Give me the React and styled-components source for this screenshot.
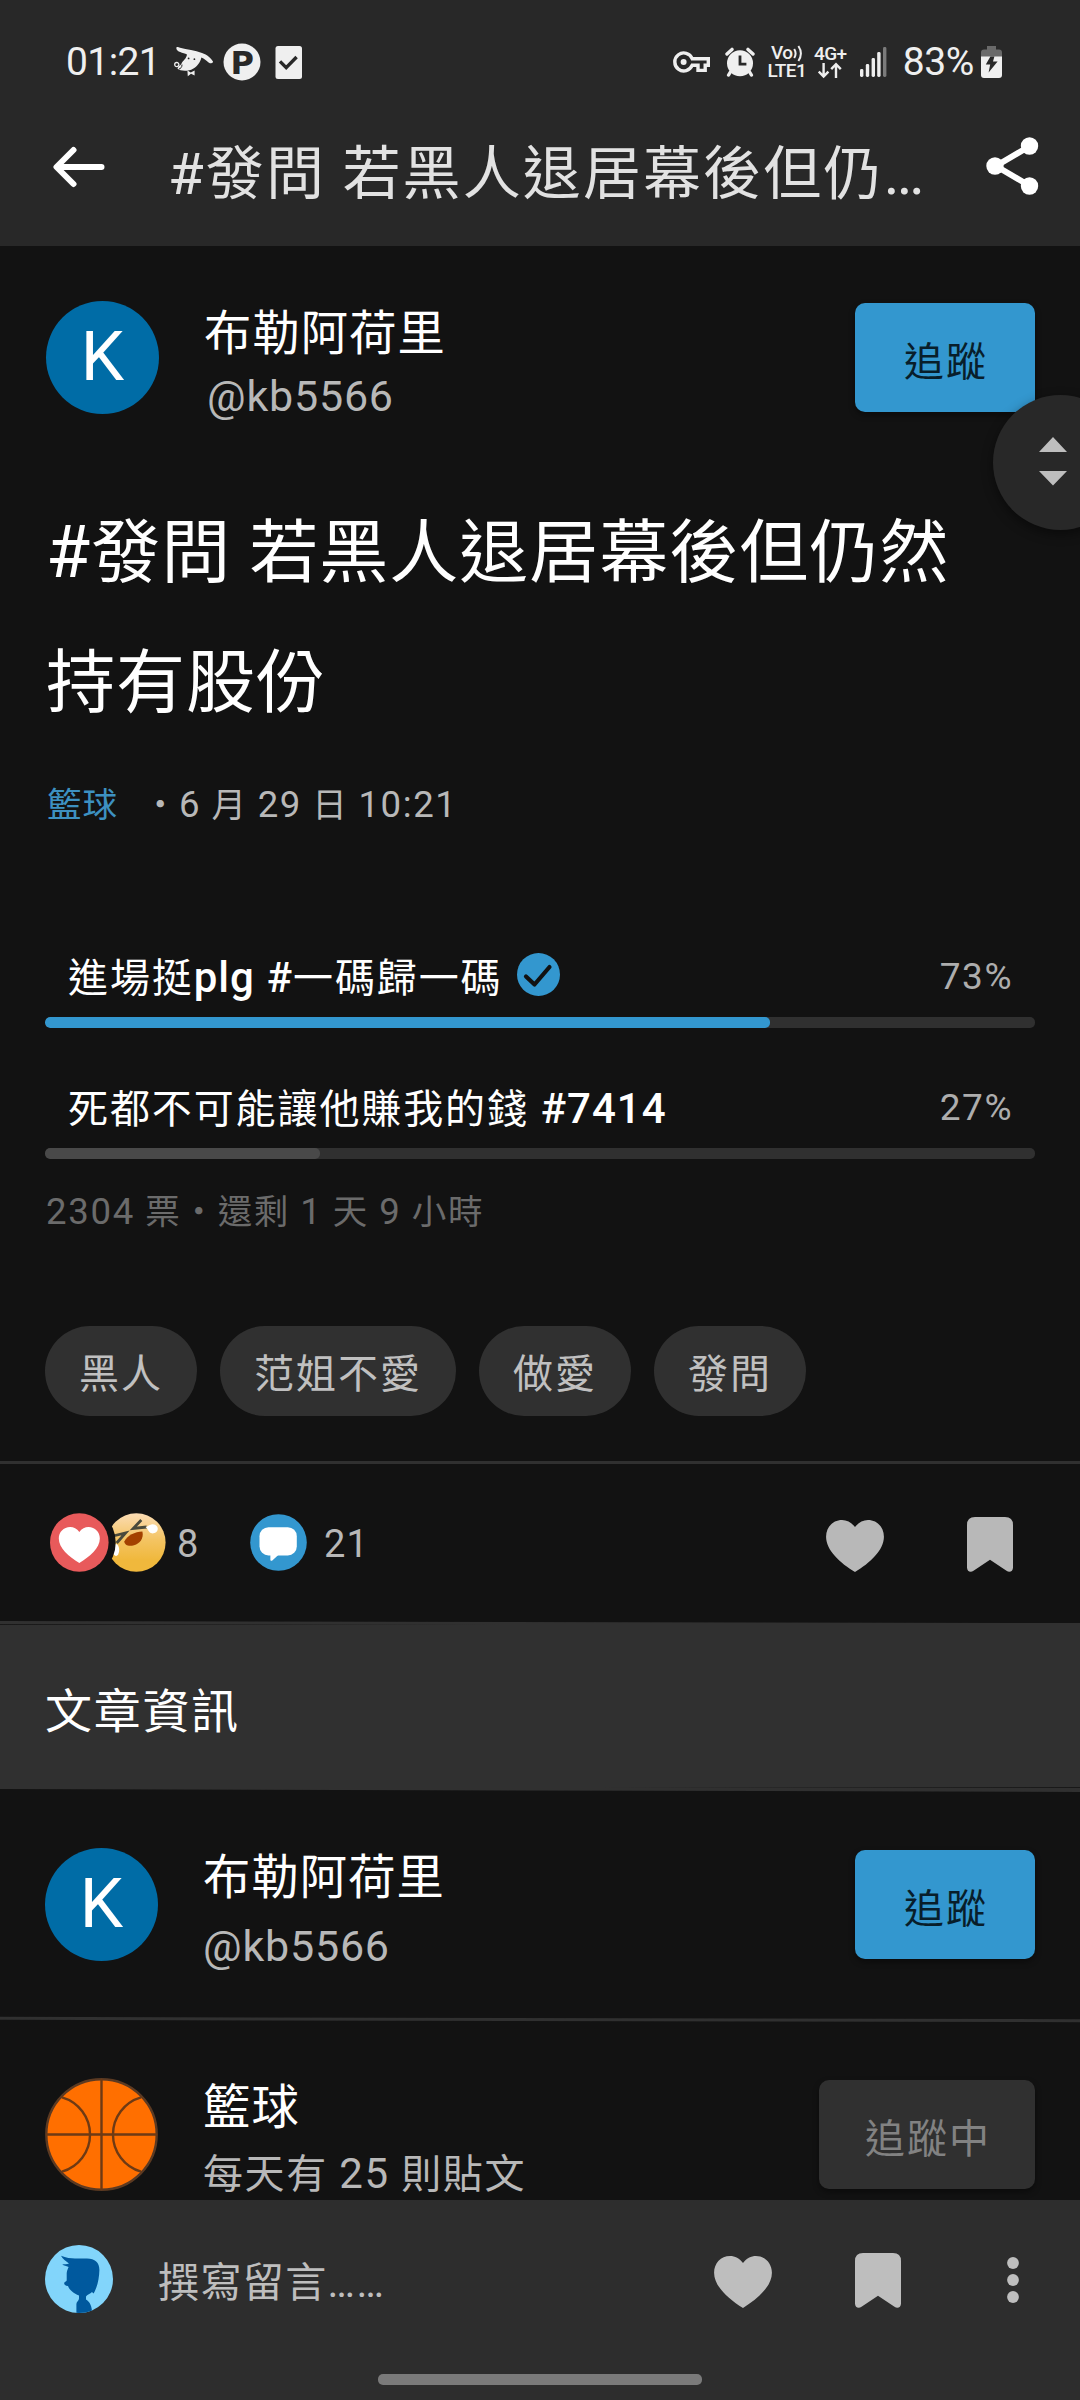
import styled, { createGlobalStyle } from 'styled-components';

const GlobalStyle = createGlobalStyle`
  * {
    box-sizing: border-box;
  }
  body {
    margin: 0;
    background-color: #121212;
    font-family: Roboto, 'Noto Sans CJK TC', sans-serif;
    color: #ffffff;
  }
  h1, h2, p {
    margin: 0;
    font-weight: 400;
  }
  button {
    border: none;
    padding: 0;
    background: none;
    font-family: inherit;
    color: inherit;
  }
  svg {
    display: block;
    flex: none;
  }
`;

const Screen = styled.div`
  position: relative;
  width: 1080px;
  height: 2400px;
  display: flex;
  flex-direction: column;
  overflow: hidden;
  background-color: #121212;
`;

const Header = styled.header`
  flex: none;
  height: 246px;
  background-color: #282828;
`;

const StatusBar = styled.div`
  height: 124px;
  padding: 0 78px 0 66px;
  display: flex;
  justify-content: space-between;
  align-items: center;
  color: #efefef;
  font-size: 39px;
`;

const StatusGroup = styled.div`
  display: flex;
  align-items: center;
`;

const StatusApps = styled.div`
  margin-left: 15px;
  display: flex;
  align-items: center;
  gap: 9px;

  svg:last-child {
    margin-left: 5px;
  }
`;

const Clock = styled.span`
  width: 93px;
  letter-spacing: -0.6px;
  white-space: nowrap;
`;

const AlarmBox = styled.span`
  margin: 0 14px;
`;

const NetworkLabel = styled.span`
  display: flex;
  flex-direction: column;
  align-items: center;
  width: ${(props) => props.width};
  margin-right: ${(props) => props.gap};
  font-size: 19px;
  font-weight: 500;
  line-height: 17.7px;
  letter-spacing: -0.6px;
  white-space: nowrap;
`;

const NetworkTop = styled.span`
  display: flex;
  align-items: center;
`;

const BatteryText = styled.span`
  margin: 0 7px 0 16px;
  letter-spacing: -0.4px;
`;

const TitleBar = styled.div`
  height: 122px;
  padding: 0 41px 0 53px;
  display: flex;
  align-items: flex-start;
`;

const IconButton = styled.button`
  height: ${(props) => props.height || '60px'};
  padding-top: ${(props) => props.$drop || 0};
  display: flex;
  align-items: center;
`;

const BarTitle = styled.h1`
  flex: 1;
  margin-left: 63px;
  color: #e2e2e2;
  font-size: 58px;
  letter-spacing: 2.1px;
  line-height: 100px;
  white-space: nowrap;
`;

const Content = styled.main`
  flex: 1;
  min-height: 0;
  overflow: hidden;
`;

const PersonRow = styled.div`
  height: ${(props) => props.height};
  padding: ${(props) => props.top} 45px 0;
  display: flex;
  align-items: flex-start;
`;

const Avatar = styled.div`
  flex: none;
  width: 113px;
  height: 113px;
  margin-left: ${(props) => props.$nudge || 0};
  border-radius: 50%;
  background-color: #006ca6;
  font-size: 69px;
  line-height: 112px;
  text-align: center;
`;

const PersonInfo = styled.div`
  flex: 1;
  margin-left: ${(props) => props.indent || '45px'};
  margin-top: ${(props) => props.shift || '-1px'};
  display: flex;
  flex-direction: column;
  gap: ${(props) => props.gap};
  line-height: 62px;
  white-space: nowrap;
`;

const PersonName = styled.span`
  font-size: 47.3px;
  letter-spacing: 1.1px;
`;

const PersonDetail = styled.span`
  margin-left: ${(props) => props.$nudge || 0};
  color: #b8b8b8;
  font-size: ${(props) => props.size || '43px'};
  letter-spacing: ${(props) => props.spacing || '0.8px'};
`;

const Num = styled.span`
  font-size: ${(props) => props.size || '1.06em'};
  font-weight: ${(props) => props.weight || 'inherit'};
  letter-spacing: ${(props) => props.spacing || 'inherit'};
  line-height: 1;
`;

const FollowButton = styled.button`
  flex: none;
  width: ${(props) => (props.$following ? '216px' : '180px')};
  height: 109px;
  margin-top: 2px;
  padding: 2px 0 0 2px;
  border-radius: 10px;
  background-color: ${(props) => (props.$following ? '#303030' : '#3397cf')};
  box-shadow: 0 3px 6px rgba(0, 0, 0, 0.4);
  color: ${(props) => (props.$following ? '#828282' : '#081e2b')};
  font-size: 40px;
  letter-spacing: 2px;
`;

const PostTitle = styled.h2`
  width: 940px;
  margin: 60px 0 0 46px;
  font-size: 69px;
  letter-spacing: 1px;
  line-height: 130px;
`;

const Meta = styled.p`
  margin: 31px 0 0 47px;
  display: flex;
  color: #b8b8b8;
  font-size: 34.5px;
  letter-spacing: 1.6px;
  line-height: 50px;
  white-space: nowrap;
`;

const Forum = styled.span`
  width: 96px;
  color: #3d91c1;
  letter-spacing: 1px;
`;

const Poll = styled.section`
  margin: 118px 45px 0;
`;

const Option = styled.div`
  margin-bottom: 51px;
`;

const OptionRow = styled.div`
  height: 61px;
  padding: 0 22px 0 23px;
  display: flex;
  align-items: center;
  font-size: 40px;
  letter-spacing: 1.9px;
  line-height: 61px;
  white-space: nowrap;

  svg {
    margin: -8px 0 0 15px;
  }
`;

const Percent = styled.span`
  height: 61px;
  margin-left: auto;
  color: #adadad;
  font-size: 37px;
  letter-spacing: 1.5px;
  line-height: 58px;
`;

const Track = styled.div`
  height: 11px;
  margin-top: 8px;
  border-radius: 5px;
  background-color: #303030;
  overflow: hidden;
`;

const Fill = styled.div`
  height: 11px;
  border-radius: 5px;
  background-color: ${(props) => (props.$picked ? '#3397cf' : '#494949')};
`;

const PollFooter = styled.p`
  margin: -23px 0 0 1px;
  color: #6b6b6b;
  font-size: 34.5px;
  letter-spacing: 1.7px;
  line-height: 50px;
`;

const Tags = styled.div`
  margin: 89px 45px 45px;
  display: flex;
  gap: 23px;
`;

const Tag = styled.span`
  height: 90px;
  padding: 4px 34px 0;
  border-radius: 45px;
  background-color: #303030;
  color: #c0c0c0;
  font-size: 40px;
  letter-spacing: 2px;
  line-height: 90px;
`;

const Divider = styled.div`
  height: 3px;
  background-color: #303030;
  transform: ${(props) => (props.$tilted ? 'skewY(0.12deg)' : 'none')};
`;

const ActionRow = styled.div`
  height: 157px;
  padding: 0 67px 0 50px;
  display: flex;
  align-items: center;
  color: #b8b8b8;
`;

const Count = styled.span`
  width: ${(props) => props.width};
  padding: 3px 0 0 ${(props) => props.pad};
  font-size: 38px;
  letter-spacing: 1.2px;
`;

const Actions = styled.div`
  margin-left: auto;
  display: flex;
  align-items: center;
  gap: 83px;
`;

const SectionTitle = styled.div`
  position: relative;
  height: 171px;
  margin-bottom: -2px;
  padding: 13px 45px 0;
  background-color: #303030;
  clip-path: polygon(0 0, 100% 2px, 100% 100%, 0 168px);
  font-size: 47px;
  letter-spacing: 1.7px;
  line-height: 156px;

  &::before,
  &::after {
    content: '';
    position: absolute;
    height: 1px;
  }
  &::before {
    top: 3px;
    left: 0;
    width: 500px;
    background: linear-gradient(to right, #181818, #303030);
  }
  &::after {
    bottom: 4px;
    right: 0;
    width: 480px;
    background: linear-gradient(to left, #181818, #303030);
  }
`;

const BottomBar = styled.footer`
  flex: none;
  height: 200px;
  display: flex;
  flex-direction: column;
  align-items: center;
  background-color: #2d2d2d;
`;

const Composer = styled.div`
  width: 100%;
  height: 174px;
  padding: 0 61px 16px 45px;
  display: flex;
  align-items: center;
  color: #bebebe;
`;

const Placeholder = styled.span`
  flex: 1;
  margin: 0 0 0 45px;
  font-size: 41px;
  letter-spacing: 1.4px;
`;

const MoreButton = styled(IconButton)`
  margin-left: 23px;
`;

const HomeIndicator = styled.div`
  width: 324px;
  height: 11px;
  border-radius: 5px;
  background-color: #7a7a7a;
`;

const ScrollHandle = styled.div`
  position: absolute;
  top: 395px;
  left: 993px;
  width: 135px;
  height: 135px;
  padding: 42px 0 0 46px;
  border-radius: 50%;
  background-color: #282828;
  box-shadow: 0 4px 12px rgba(0, 0, 0, 0.45);
`;

const HEART_PATH =
  'M28.7 7C25.5 2.6 20.6 0 15.9 0C6.6 0 0 7.4 0 16.5C0 30 14 42.5 28.7 51.6C43.4 42.5 57.4 30 57.4 16.5C57.4 7.4 50.8 0 41.5 0C36.8 0 31.9 2.6 28.7 7Z';

const Heart = () => (
  <svg width="58" height="52" viewBox="0 0 57.4 51.6" fill="currentColor">
    <path d={HEART_PATH} />
  </svg>
);

const Bookmark = () => (
  <svg width="46" height="55" viewBox="0 0 46 55" fill="currentColor">
    <path d="M8 0H38Q46 0 46 8V50.5C46 54.5 42.5 56 39.5 53.8L23 42.7L6.5 53.8C3.5 56 0 54.5 0 50.5V8Q0 0 8 0Z" />
  </svg>
);

const DogIcon = () => (
  <svg width="40" height="30" viewBox="0 0 40 30">
    <path
      fill="#efefef"
      d="M2.4 .6C3.2-.4 4.6 .2 6 .8C13 2.6 21 3.4 28 6C33 7.6 37.5 11.4 39 14.6C39 16.8 36.4 16.6 34.6 15.4C32 13.6 30.5 11.4 27.4 10.4C26.5 15 22.6 20 19 21.8C14.4 24.6 6.4 24.4 3.4 21.6C4.4 18.6 7 18.6 8 15.4C9.4 13 12.2 12 13 7.4C9 5.6 1.6 5 2.4 .6Z"
    />
    <circle cx="2.8" cy="17.6" r="2.1" fill="none" stroke="#efefef" strokeWidth="1.3" />
    <circle cx="14.6" cy="11.4" r="0.9" fill="#282828" />
    <circle cx="20.4" cy="12.2" r="0.9" fill="#282828" />
    <path d="M8 17.6C8 20.4 6.6 21.6 5 22" stroke="#282828" fill="none" />
    <path fill="#efefef" d="M13.4 23.6L16.8 25.4L20.6 23.4V28.4L17 26.8L13.8 29.2Z" />
  </svg>
);

const ParkingIcon = () => (
  <svg width="38" height="38" viewBox="0 0 38 38">
    <circle cx="19" cy="19" r="18.5" fill="#efefef" />
    <text x="7.5" y="30.5" fill="#282828" fontSize="32" fontWeight="700" fontFamily="DejaVu Sans">
      P
    </text>
  </svg>
);

const CheckboxIcon = () => (
  <svg width="28" height="33" viewBox="0 0 28 33">
    <rect x="0.5" width="26.5" height="33" rx="2.5" fill="#efefef" />
    <path d="M5 15.4L11.2 21.6L21.6 11" fill="none" stroke="#282828" strokeWidth="3.4" />
  </svg>
);

const KeyIcon = () => (
  <svg width="38" height="22" viewBox="0 0 38 22">
    <path
      fill="none"
      stroke="#efefef"
      strokeWidth="3.4"
      d="M19.2 7.7H35.3V14.2H32.2V19.4H25V14.2H19.2A9 9 0 1 1 19.2 7.7Z"
    />
    <circle cx="10.6" cy="11" r="3" fill="#efefef" />
  </svg>
);

const AlarmIcon = () => (
  <svg width="30" height="30" viewBox="0 0 30 30">
    <circle cx="15" cy="16.2" r="13" fill="#efefef" />
    <path
      d="M2 7L7 2.4M28 7L23 2.4M5.4 25L3.6 28M24.6 25L26.4 28"
      stroke="#efefef"
      strokeWidth="3.4"
      strokeLinecap="round"
    />
    <path d="M15 8.6V17.2H21.4" fill="none" stroke="#282828" strokeWidth="2.8" />
  </svg>
);

const VoWaves = () => (
  <svg width="10" height="17" viewBox="0 0 10 17" fill="none" stroke="#efefef" strokeWidth="2">
    <path d="M1.2 4Q4 8.5 1.2 13M5.4 1Q10.4 8.5 5.4 16" />
  </svg>
);

const DataArrows = () => (
  <svg width="24" height="17" viewBox="0 0 24 17" fill="none" stroke="#efefef" strokeWidth="2.4">
    <path d="M5.6 1V14.4M0.8 9.6L5.6 14.6L10.4 9.6M18 16V2.4M13.2 7.2L18 2.2L22.8 7.2" />
  </svg>
);

const SignalIcon = () => (
  <svg width="27" height="30" viewBox="0 0 27 30" fill="#efefef">
    <rect x="0" y="22" width="3.4" height="8" rx="1.4" />
    <rect x="5.8" y="17" width="3.4" height="13" rx="1.4" />
    <rect x="11.6" y="11" width="3.4" height="19" rx="1.4" />
    <rect x="17.2" y="5" width="3.4" height="25" rx="1.4" />
    <rect x="23" y="0" width="3.4" height="30" rx="1.4" fill="#7b7b7b" />
  </svg>
);

const BatteryIcon = () => (
  <svg width="21" height="32" viewBox="0 0 21 32">
    <path d="M6 0H15V3.5H18Q21 3.5 21 6.5V12H0V6.5Q0 3.5 3 3.5H6Z" fill="#6a6a6a" />
    <path d="M0 10.5H21V29Q21 32 18 32H3Q0 32 0 29Z" fill="#efefef" />
    <path d="M9.4 10.5H13.4L12 15.4H16.6L7.6 26.6L9.2 18.6H4.8Z" fill="#282828" />
  </svg>
);

const BackIcon = () => (
  <svg width="52" height="42" viewBox="0 0 52 42">
    <path
      d="M48.5 21H4M20.5 4L3.5 21L20.5 38"
      fill="none"
      stroke="#ffffff"
      strokeWidth="6"
      strokeLinecap="round"
      strokeLinejoin="round"
    />
  </svg>
);

const ShareIcon = () => (
  <svg width="53" height="58" viewBox="0 0 53 58">
    <path d="M44 9L10 29L44 49" fill="none" stroke="#ffffff" strokeWidth="6" />
    <g fill="#ffffff">
      <circle cx="43.5" cy="9" r="8.7" />
      <circle cx="9" cy="29" r="8.7" />
      <circle cx="43.5" cy="49" r="8.7" />
    </g>
  </svg>
);

const PickedIcon = () => (
  <svg width="43" height="43" viewBox="0 0 43 43">
    <circle cx="21.5" cy="21.5" r="21.5" fill="#3397cf" />
    <path
      d="M9 23.5L17.5 31.5L32.5 14"
      fill="none"
      stroke="#121212"
      strokeWidth="4.2"
      strokeLinecap="round"
      strokeLinejoin="round"
    />
  </svg>
);

const Reactions = () => (
  <svg width="116" height="59" viewBox="0 0 116 59">
    <defs>
      <linearGradient id="face" x1="0" y1="0" x2="0" y2="1">
        <stop offset="0" stopColor="#fbdcb4" />
        <stop offset="0.45" stopColor="#f4c463" />
        <stop offset="0.8" stopColor="#f0b83c" />
      </linearGradient>
      <mask id="cutout">
        <rect width="59" height="59" fill="#ffffff" />
        <circle cx="-27.7" cy="29.5" r="36.4" fill="#000000" />
      </mask>
    </defs>
    <circle cx="29.3" cy="29.5" r="29.3" fill="#e85a5b" />
    <path d={HEART_PATH} fill="#ffffff" transform="translate(8.8 14) scale(0.715 0.7)" />
    <g transform="translate(57)" mask="url(#cutout)">
      <circle cx="29.3" cy="29.5" r="29.3" fill="url(#face)" />
      <path
        d="M34.3 7L26.3 15.4L39.7 14M6 23L18.6 20L9.7 30"
        fill="none"
        stroke="#4a4a3c"
        strokeWidth="2.8"
      />
      <path
        d="M17.3 28.5C20 22.4 28 18.6 35.4 18.4C37 25 33 30.4 27 32.2C22 33.6 17.5 32.4 17.3 28.5Z"
        fill="#a34100"
      />
      <path d="M38.5 14C41 13.4 42.4 11.4 45.6 11.2A4.8 4.6 0 1 1 42 18.4C40.6 17 40.4 15 38.5 14Z" fill="#ffffff" />
      <ellipse cx="9" cy="37" rx="3.2" ry="6" fill="#ffffff" />
    </g>
  </svg>
);

const CommentIcon = () => (
  <svg width="57" height="57" viewBox="0 0 57 57">
    <circle cx="28.5" cy="28.5" r="28.3" fill="#3397cf" />
    <rect x="9.5" y="13.2" width="37.3" height="28.2" rx="9" fill="#ffffff" />
    <path d="M20.4 40L20.4 46Q21 47.6 22.6 46.2L29.4 40Z" fill="#ffffff" />
  </svg>
);

const BallIcon = () => (
  <svg width="113" height="113" viewBox="0 0 113 113">
    <circle cx="56.5" cy="56.5" r="55.2" fill="#ff6f00" stroke="#5c3a22" strokeWidth="2.4" />
    <path
      d="M56.5 1V112M1 56.5H112M17 19.3A38.7 38.7 0 0 1 17 93.7M96 19.3A38.7 38.7 0 0 0 96 93.7"
      fill="none"
      stroke="#6e3a14"
      strokeWidth="2.4"
    />
  </svg>
);

const UserIcon = () => (
  <svg width="68" height="68" viewBox="0 0 68 68">
    <clipPath id="userClip">
      <circle cx="34" cy="34" r="34" />
    </clipPath>
    <circle cx="34" cy="34" r="34" fill="#82d5fb" />
    <path
      clipPath="url(#userClip)"
      fill="#00599e"
      d="M16 10.7C21 13 26 13.2 30 13.4L42 13.4C50 13.6 54.4 17 54.4 25C54.2 34 52 43 48.5 48.6L47 47C45.4 49 42 49.6 41 51.6V54.4C45 57 47 61 47 68H31.4V59C31.4 57 34 56 34 53.6V50.6C29 48.6 24.4 45 23 41C20 41 19 39.4 19.2 38C19.6 36.4 21.6 37 21.7 35L21.7 28C22 25 23.2 23.4 23.6 22C21 20.8 19 20.6 17.2 19.6C19.4 19.2 22 19.6 24 18.6C21 16 17.6 14 16 10.7Z"
    />
  </svg>
);

const MoreIcon = () => (
  <svg width="12" height="46" viewBox="0 0 12 46" fill="currentColor">
    <circle cx="6" cy="6" r="5.9" />
    <circle cx="6" cy="23" r="5.9" />
    <circle cx="6" cy="40" r="5.9" />
  </svg>
);

const options = [
  { id: 1, label: '進場挺plg #一碼歸一碼', percent: 73, width: 73.2, picked: true },
  { id: 2, label: '死都不可能讓他賺我的錢 #7414', percent: 27, width: 27.8, picked: false },
];

const tags = ['黑人', '范姐不愛', '做愛', '發問'];

// Latin runs are set a little larger and heavier than the Chinese around them
const OptionLabel = ({ text }) => (
  <span>
    {text.split(/([!-~]+)/).map((part, index) =>
      index % 2 ? (
        <Num key={index} size="42px" weight="500" spacing="1px">
          {part}
        </Num>
      ) : (
        part
      )
    )}
  </span>
);

const App = () => {
  return (
    <>
      <GlobalStyle />
      <Screen>
        <Header>
          <StatusBar>
            <StatusGroup>
              <Clock>01:21</Clock>
              <StatusApps>
                <DogIcon />
                <ParkingIcon />
                <CheckboxIcon />
              </StatusApps>
            </StatusGroup>
            <StatusGroup>
              <KeyIcon />
              <AlarmBox>
                <AlarmIcon />
              </AlarmBox>
              <NetworkLabel width="36px" gap="9px">
                <NetworkTop>
                  Vo
                  <VoWaves />
                </NetworkTop>
                <span>LTE1</span>
              </NetworkLabel>
              <NetworkLabel width="33px" gap="13px">
                <span>4G+</span>
                <DataArrows />
              </NetworkLabel>
              <SignalIcon />
              <BatteryText>83%</BatteryText>
              <BatteryIcon />
            </StatusGroup>
          </StatusBar>
          <TitleBar>
            <IconButton height="86px">
              <BackIcon />
            </IconButton>
            <BarTitle>
              #發問 若黑人退居幕後但仍<Num size="61px">…</Num>
            </BarTitle>
            <IconButton height="84px">
              <ShareIcon />
            </IconButton>
          </TitleBar>
        </Header>

        <Content>
          <PersonRow height="183px" top="55px">
            <Avatar $nudge="1px">K</Avatar>
            <PersonInfo gap="0" shift="2px">
              <PersonName>布勒阿荷里</PersonName>
              <PersonDetail $nudge="3px">@kb5566</PersonDetail>
            </PersonInfo>
            <FollowButton>追蹤</FollowButton>
          </PersonRow>

          <PostTitle>
            <Num size="1.04em">#</Num>發問 若黑人退居幕後但仍然持有股份
          </PostTitle>
          <Meta>
            <Forum>籃球</Forum>
            <span>
              ・<Num>6</Num> 月 <Num>29</Num> 日 <Num>10:21</Num>
            </span>
          </Meta>

          <Poll>
            {options.map((option) => (
              <Option key={option.id}>
                <OptionRow>
                  <OptionLabel text={option.label} />
                  {option.picked && <PickedIcon />}
                  <Percent>{option.percent}%</Percent>
                </OptionRow>
                <Track>
                  <Fill $picked={option.picked} style={{ width: `${option.width}%` }} />
                </Track>
              </Option>
            ))}
            <PollFooter>
              <Num>2304</Num> 票・還剩 <Num>1</Num> 天 <Num>9</Num> 小時
            </PollFooter>
          </Poll>

          <Tags>
            {tags.map((tag) => (
              <Tag key={tag}>{tag}</Tag>
            ))}
          </Tags>

          <Divider />
          <ActionRow>
            <Reactions />
            <Count width="84px" pad="11px">
              8
            </Count>
            <CommentIcon />
            <Count width="80px" pad="17px">
              21
            </Count>
            <Actions>
              <IconButton $drop="7px">
                <Heart />
              </IconButton>
              <IconButton $drop="4px">
                <Bookmark />
              </IconButton>
            </Actions>
          </ActionRow>

          <SectionTitle>文章資訊</SectionTitle>
          <PersonRow height="228px" top="58px">
            <Avatar>K</Avatar>
            <PersonInfo gap="6px">
              <PersonName>布勒阿荷里</PersonName>
              <PersonDetail>@kb5566</PersonDetail>
            </PersonInfo>
            <FollowButton>追蹤</FollowButton>
          </PersonRow>
          <Divider $tilted />
          <PersonRow height="228px" top="57px">
            <BallIcon />
            <PersonInfo gap="5px">
              <PersonName>籃球</PersonName>
              <PersonDetail size="40px" spacing="1.6px">
                每天有 <Num size="42px">25</Num> 則貼文
              </PersonDetail>
            </PersonInfo>
            <FollowButton $following>追蹤中</FollowButton>
          </PersonRow>
        </Content>

        <BottomBar>
          <Composer>
            <UserIcon />
            <Placeholder>撰寫留言……</Placeholder>
            <Actions>
              <IconButton $drop="6px">
                <Heart />
              </IconButton>
              <IconButton $drop="3px">
                <Bookmark />
              </IconButton>
              <MoreButton $drop="2px">
                <MoreIcon />
              </MoreButton>
            </Actions>
          </Composer>
          <HomeIndicator />
        </BottomBar>

        <ScrollHandle>
          <svg width="28" height="49" viewBox="0 0 28 49" fill="#bebebe">
            <path d="M0 15L14 0L28 15ZM0 34L14 48.5L28 34Z" />
          </svg>
        </ScrollHandle>
      </Screen>
    </>
  );
};

export default App;
